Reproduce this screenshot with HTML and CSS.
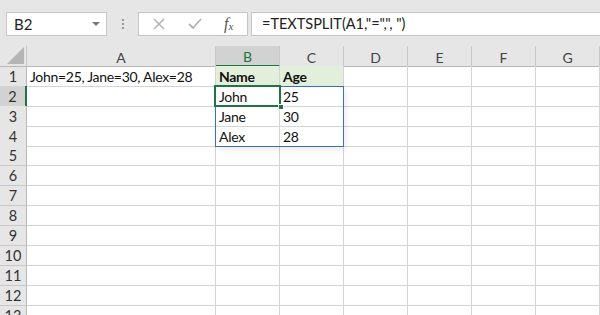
FILE: index.html
```html
<!DOCTYPE html>
<html lang="en">
<head>
  <meta charset="UTF-8" />
  <title>TEXTSPLIT</title>
  <link rel="stylesheet" href="styles.css">
</head>
<body>

<div class="toolbar">
  <div class="name-box">
    <span>B2</span>
    <span class="arrow"></span>
  </div>
  <div class="dots"><i></i><i></i><i></i></div>
  <div class="fx-buttons">
    <svg class="icon" width="14" height="14" viewBox="0 0 14 14"><path d="M2 2 L12 12 M12 2 L2 12" stroke="#b3b3b3" stroke-width="1.6" fill="none"/></svg>
    <svg class="icon" width="16" height="14" viewBox="0 0 16 14"><path d="M2 7 L6 11 L14 2" stroke="#b3b3b3" stroke-width="1.8" fill="none"/></svg>
    <span class="fx">f<sub>x</sub></span>
  </div>
  <div class="formula">=TEXTSPLIT(A1,"=",", ")</div>
</div>

<div class="sheet">
  <div class="grid">
    <div class="corner"></div>
    <div class="col-head">A</div>
    <div class="col-head active">B</div>
    <div class="col-head">C</div>
    <div class="col-head">D</div>
    <div class="col-head">E</div>
    <div class="col-head">F</div>
    <div class="col-head">G</div>
  </div>
  <div id="rows"></div>

  <div class="spill"></div>
  <div class="cursor"><span class="handle"></span></div>
</div>

<script>
  const data = {
    1: ['John=25, Jane=30, Alex=28', 'Name', 'Age'],
    2: ['', 'John', '25'],
    3: ['', 'Jane', '30'],
    4: ['', 'Alex', '28']
  };
  const rows = document.getElementById('rows');

  for (let r = 1; r <= 13; r++) {
    const row = document.createElement('div');
    row.className = 'grid';
    const vals = data[r] || [];
    let html = `<div class="row-head ${r === 2 ? 'active' : ''}">${r}</div>`;
    for (let c = 0; c < 7; c++) {
      const cls = (r === 1 && (c === 1 || c === 2)) ? 'cell head-cell' : 'cell';
      html += `<div class="${cls}">${vals[c] || ''}</div>`;
    }
    row.innerHTML = html;
    rows.appendChild(row);
  }
</script>

</body>
</html>
```

FILE: styles.css
```css
* {
  box-sizing: border-box;
}
body {
  margin: 0;
  width: 600px;
  height: 315px;
  overflow: hidden;
  background: #fff;
  font-family: Lato, 'Open Sans', sans-serif;
  color: #000;
}

/* formula bar */
.toolbar {
  height: 46px;
  background: #e6e6e6;
  display: flex;
  align-items: flex-start;
  padding: 12px 0 0 6px;
}
.name-box {
  width: 101px;
  height: 24px;
  background: #fff;
  border: 1px solid #c6c6c6;
  display: flex;
  align-items: center;
  justify-content: space-between;
  padding: 0 6px 0 7px;
  font-size: 15px;
  color: #222;
}
.arrow {
  width: 0;
  height: 0;
  border-left: 4px solid transparent;
  border-right: 4px solid transparent;
  border-top: 4px solid #777;
}
.dots {
  width: 31px;
  height: 24px;
  display: flex;
  flex-direction: column;
  align-items: center;
  justify-content: center;
  gap: 2px;
}
.dots i {
  width: 2px;
  height: 2px;
  background: #999;
}
.fx-buttons {
  width: 110px;
  height: 24px;
  background: #fff;
  border: 1px solid #c6c6c6;
  display: flex;
  align-items: center;
  padding-left: 13px;
  gap: 21px;
}
.fx {
  font-family: 'Liberation Serif', serif;
  font-style: italic;
  font-size: 16px;
  color: #555;
}
.fx sub {
  font-size: 11px;
  vertical-align: -1px;
}
.formula {
  flex: 1;
  height: 24px;
  margin-left: 3px;
  background: #fff;
  border: 1px solid #c6c6c6;
  border-right: none;
  font-size: 14.5px;
  line-height: 22px;
  padding-left: 10px;
  color: #222;
}

/* sheet */
.sheet {
  position: relative;
}
.grid {
  display: grid;
  grid-template-columns: 27px 189px repeat(6, 64px);
  height: 20px;
}
.corner, .col-head, .row-head {
  background: #e6e6e6;
  color: #444;
  font-size: 14px;
  display: flex;
  align-items: center;
  justify-content: center;
  border-right: 1px solid #c8c8c8;
  border-bottom: 1px solid #b8b8b8;
}
.col-head {
  padding-top: 2px;
}
.corner {
  position: relative;
}
.corner::after {
  content: "";
  position: absolute;
  right: 2px;
  bottom: 2px;
  border-left: 17px solid transparent;
  border-bottom: 17px solid #b5b5b5;
}
.col-head.active {
  background: #d2d2d2;
  color: #217346;
  border-bottom: 2px solid #217346;
}
.row-head {
  color: #333;
  font-size: 14.5px;
  border-bottom: 1px solid #c8c8c8;
  border-right: 1px solid #b8b8b8;
}
.row-head.active {
  background: #d2d2d2;
  color: #333;
  border-right: 2px solid #217346;
}
.cell {
  border-right: 1px solid #d4d4d4;
  border-bottom: 1px solid #d4d4d4;
  font-size: 14px;
  letter-spacing: -0.3px;
  line-height: 19px;
  padding: 1px 0 0 3px;
  white-space: nowrap;
  color: #111;
}
.head-cell {
  background: #e2efda;
  font-weight: bold;
}

/* selection overlays */
.spill {
  position: absolute;
  left: 215px;
  top: 40px;
  width: 129px;
  height: 61px;
  border: 1px solid #3a6fc8;
  box-shadow: 2px 3px 6px rgba(0, 0, 0, 0.08);
}
.cursor {
  position: absolute;
  left: 214px;
  top: 39px;
  width: 67px;
  height: 22px;
  border: 2px solid #217346;
}
.handle {
  position: absolute;
  right: -5px;
  bottom: -5px;
  width: 6px;
  height: 6px;
  background: #217346;
  border: 1px solid #fff;
}
```
